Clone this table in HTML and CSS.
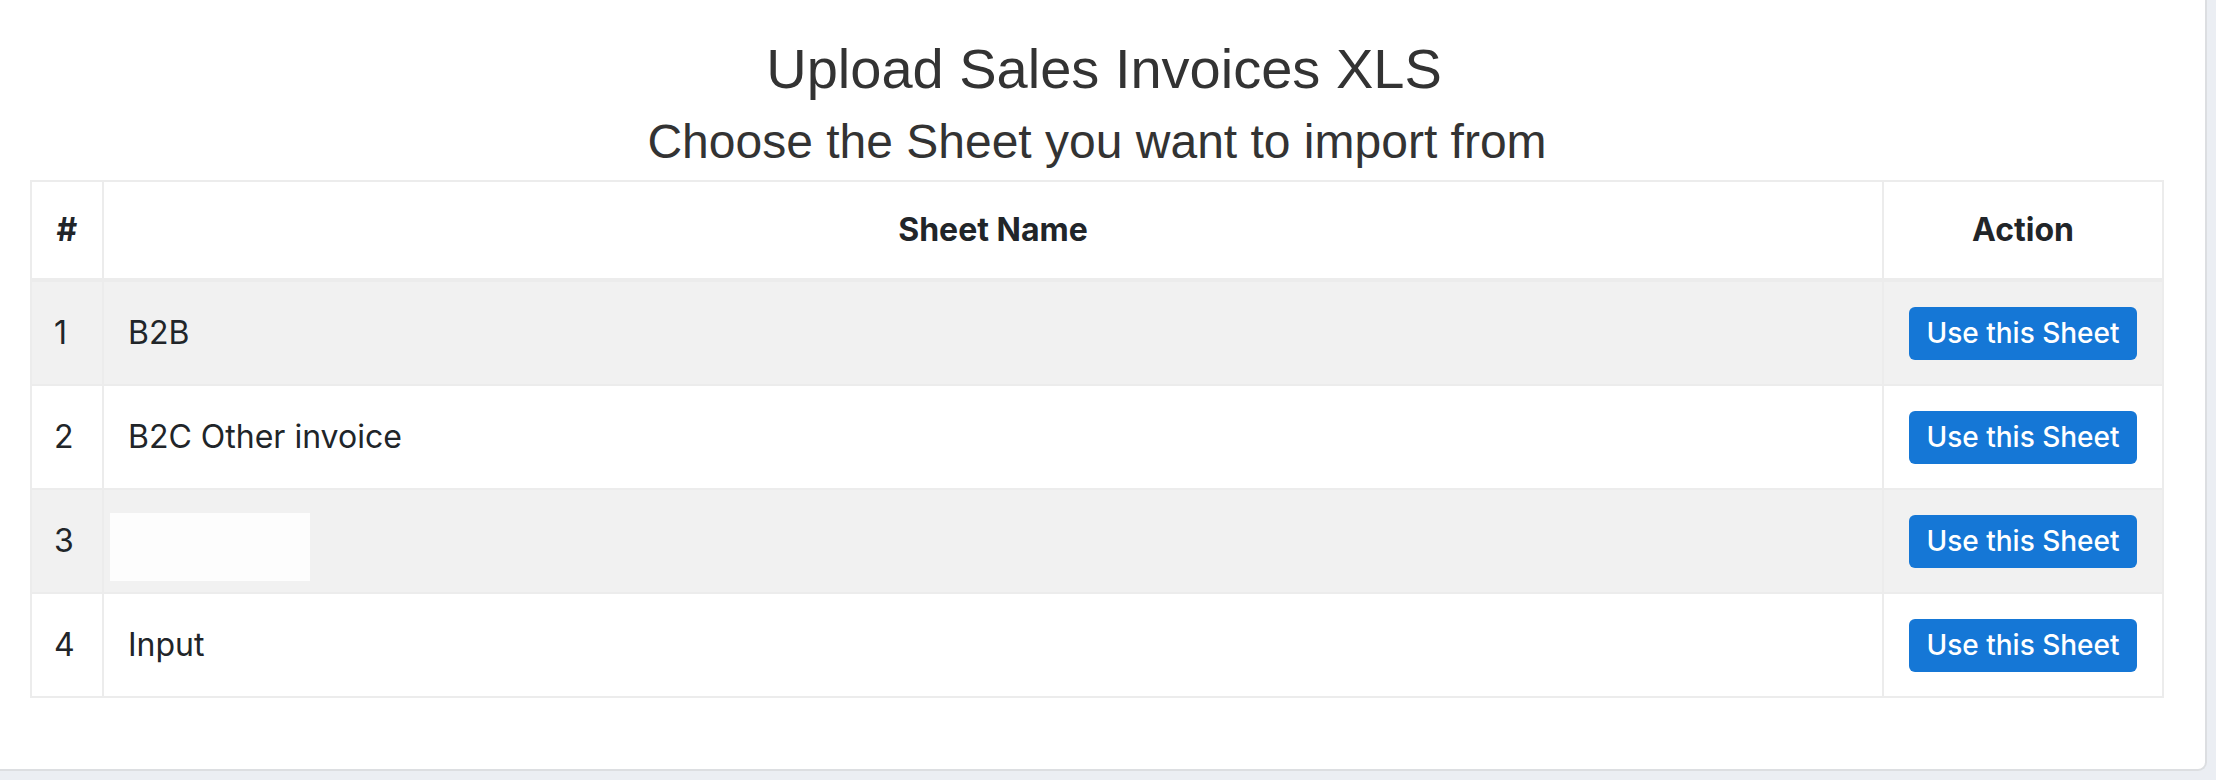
FILE: index.html
```html
<!DOCTYPE html>
<html lang="en">
<head>
<meta charset="utf-8">
<title>Upload Sales Invoices XLS</title>
<link rel="stylesheet" href="styles.css">
</head>
<body>
<div class="card">
  <h1 class="title">Upload Sales Invoices XLS</h1>
  <h2 class="subtitle">Choose the Sheet you want to import from</h2>
  <table class="sheets">
    <colgroup>
      <col class="c-num">
      <col>
      <col class="c-act">
    </colgroup>
    <thead>
      <tr><th>#</th><th>Sheet Name</th><th>Action</th></tr>
    </thead>
    <tbody>
      <tr class="odd"><td>1</td><td class="name">B2B</td><td class="act"><span class="btn">Use this Sheet</span></td></tr>
      <tr><td>2</td><td class="name">B2C Other invoice</td><td class="act"><span class="btn">Use this Sheet</span></td></tr>
      <tr class="odd"><td>3</td><td class="name"><span class="blank"></span></td><td class="act"><span class="btn">Use this Sheet</span></td></tr>
      <tr><td>4</td><td class="name">Input</td><td class="act"><span class="btn">Use this Sheet</span></td></tr>
    </tbody>
  </table>
</div>
</body>
</html>
```

FILE: styles.css
```css
html, body {
  margin: 0;
  padding: 0;
}
body {
  background: #ebeef3;
  width: 2216px;
  height: 780px;
  overflow: hidden;
}
.card {
  box-sizing: border-box;
  width: 2207px;
  height: 771px;
  background: #ffffff;
  border-right: 2px solid #dcdee1;
  border-bottom: 2px solid #dcdee1;
  border-bottom-right-radius: 9px;
  padding: 35px 41px 0 30px;
}
.title {
  margin: 0;
  font-family: "Liberation Sans", Arial, sans-serif;
  font-weight: 400;
  font-size: 56px;
  line-height: 67px;
  color: #333333;
  text-align: center;
  padding-left: 14px;
}
.subtitle {
  margin: 11px 0 10px;
  font-family: "Liberation Sans", Arial, sans-serif;
  font-weight: 400;
  font-size: 48px;
  line-height: 57px;
  color: #333333;
  text-align: center;
}
.sheets {
  width: 100%;
  table-layout: fixed;
  border-collapse: collapse;
  font-family: Inter, "Noto Sans", sans-serif;
  color: #212529;
  font-size: 32px;
}
.c-num { width: 72px; }
.c-act { width: 280px; }
.sheets th,
.sheets td {
  border: 2px solid #ececec;
}
.sheets th {
  padding: 24px;
  line-height: 48px;
  font-weight: 700;
  text-align: center;
  border-bottom-width: 4px;
  font-size: 32px;
}
.sheets td {
  padding: 24px;
  line-height: 54px;
  height: 54px;
  vertical-align: middle;
}
.sheets td:first-child {
  padding-left: 22px;
  padding-right: 0;
}
.sheets tr.odd td {
  background: #f1f1f1;
}
.sheets td.act {
  text-align: center;
  padding-left: 0;
  padding-right: 0;
}
.btn {
  display: inline-block;
  vertical-align: top;
  margin-top: 1px;
  width: 228px;
  height: 53px;
  line-height: 53px;
  background: #1577d6;
  color: #ffffff;
  border-radius: 6px;
  font-family: Inter, "Noto Sans", sans-serif;
  font-size: 28px;
  font-weight: 500;
  text-align: center;
}
.blank {
  display: inline-block;
  vertical-align: top;
  width: 200px;
  height: 68px;
  background: #fdfdfd;
  margin: -1px 0 -14px -18px;
}
```
